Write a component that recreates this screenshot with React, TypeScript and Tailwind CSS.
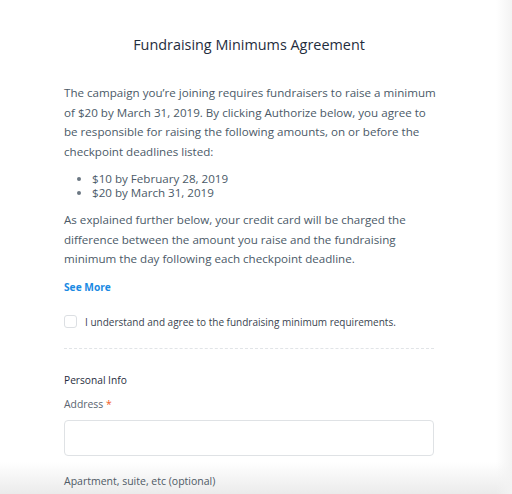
export default function App() {
  return (
    <div
      className="relative h-[494px] w-[512px] overflow-hidden bg-white"
      style={{ fontFamily: '"Open Sans", "Liberation Sans", sans-serif' }}
    >
      {/* soft page shading at the edges of the capture */}
      <div className="pointer-events-none absolute inset-x-0 bottom-0 h-[32px] bg-gradient-to-b from-transparent to-[#ebebeb]" />
      <div className="pointer-events-none absolute inset-y-0 right-0 w-[16px] bg-gradient-to-r from-transparent to-[#f3f3f3]" />

      <div className="relative ml-[64px] w-[370px] pt-[33px]">
        <h1 className="text-center text-[14.4px] leading-[24px] text-[#1f2d3d]">
          Fundraising Minimums Agreement
        </h1>

        <p className="mt-[26px] whitespace-nowrap text-[11.6px] leading-[19.5px] text-[#4b5a68]">
          The campaign you’re joining requires fundraisers to raise a minimum
          <br />
          of $20 by March 31, 2019. By clicking Authorize below, you agree to
          <br />
          be responsible for raising the following amounts, on or before the
          <br />
          checkpoint deadlines listed:
        </p>

        <ul className="mt-[11px] list-disc pl-[28px] text-[11.6px] leading-[14px] text-[#4b5a68] marker:text-[#6b7782]">
          <li>$10 by February 28, 2019</li>
          <li>$20 by March 31, 2019</li>
        </ul>

        <p className="mt-[10px] text-[11.6px] leading-[19.5px] text-[#4b5a68]">
          As explained further below, your credit card will be charged the difference between the amount you
          raise and the fundraising minimum the day following each checkpoint deadline.
        </p>

        <a href="#" className="mt-[10px] block text-[10.2px] font-bold leading-[16px] text-[#1a8ae3]">
          See More
        </a>

        <label className="mt-[19px] flex items-center gap-[8px]">
          <span className="h-[13px] w-[13px] rounded-[3px] border border-[#dcdfe3] bg-white" />
          <span className="text-[10px] leading-[16px] text-[#3a4450]">
            I understand and agree to the fundraising minimum requirements.
          </span>
        </label>

        <div className="mt-[18px] border-t border-dashed border-[#e1e4e7]" />

        <h2 className="mt-[23px] text-[10.2px] font-medium leading-[16px] text-[#1f2d3d]">Personal Info</h2>

        <div className="mt-[8px] text-[10.4px] leading-[16px] text-[#5a6570]">
          Address <span className="text-[#f05a28]">*</span>
        </div>
        <div className="mt-[8px] h-[36px] rounded-[4px] border border-[#dfe2e5] bg-white" />

        <div className="mt-[17px] text-[10.5px] leading-[16px] text-[#4f5a65]">Apartment, suite, etc (optional)</div>
      </div>
    </div>
  );
}
